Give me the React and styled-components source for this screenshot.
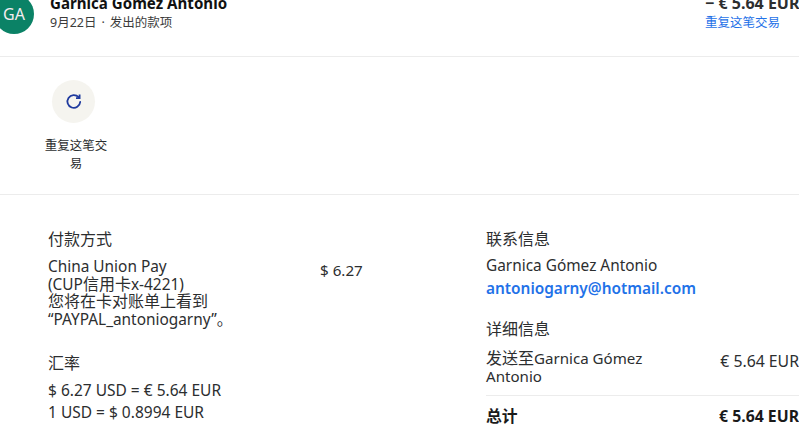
import React from "react";
import styled, { createGlobalStyle } from "styled-components";

const Global = createGlobalStyle`
  html, body { margin: 0; padding: 0; background: #fff; overflow: hidden; }
  body { font-family: "Noto Sans", "Noto Sans CJK SC", sans-serif; color: #2c2e2f; width: 799px; height: 436px; }
`;
const Page = styled.div`
  width: 799px; height: 436px; overflow: hidden;
`;
const Header = styled.header`
  height: 56px; border-bottom: 1px solid #ececec;
  display: flex; justify-content: space-between; align-items: flex-start;
`;
const Who = styled.div`display: flex; gap: 16px; margin-left: -6px;`;
const Avatar = styled.div`
  width: 40px; height: 40px; margin-top: -6px; border-radius: 50%; background: #0b8266; color: #f4ecf0;
  font-size: 16px; display: flex; align-items: center; justify-content: center; flex: none;
`;
const Name = styled.div`font-size: 15.1px; font-weight: 700; color: #111; line-height: 20px; margin-top: -7px;`;
const Sub = styled.div`font-size: 12.5px; line-height: 18px; margin-top: 1px; color: #3c3c3c;`;
const Dot = styled.span`margin: 0 5px;`;
const Amount = styled.div`width: 94px; margin-top: -7px; flex: none;`;
const AmountValue = styled.div`font-size: 16px; font-weight: 700; line-height: 20px; white-space: nowrap; color: #2c2e2f;`;
const RepeatLink = styled.a`display: block; font-size: 12.5px; line-height: 18px; margin-top: 1px; color: #1f72e8; white-space: nowrap;`;
const Actions = styled.section`
  height: 137px; border-bottom: 1px solid #ececec; padding-left: 44px;
`;
const Action = styled.div`
  width: 64px; display: flex; flex-direction: column; align-items: center; padding-top: 23px;
`;
const IconCircle = styled.div`
  width: 43px; height: 43px; border-radius: 50%; background: #f5f4ef;
  display: flex; align-items: center; justify-content: center; margin: 0 5px 14px 0;
`;
const ActionLabel = styled.div`font-size: 12.5px; line-height: 18px; text-align: center; color: #2c2e2f;`;
const Details = styled.main`
  display: grid; grid-template-columns: 438px 313px; padding: 33px 0 0 48px;
`;
const Col = styled.div`display: flex; flex-direction: column;`;
const Heading = styled.h3`font-size: 16px; line-height: 22px; font-weight: 400; margin: 0; color: #2c2e2f;`;
const Pay = styled.div`display: grid; grid-template-columns: 272px auto; margin-top: 8px;`;
const Multi = styled.div`font-size: 15.4px; line-height: 17.7px;`;
const Cjk = styled.span`font-size: 16px; line-height: 1;`;
const PayAmt = styled.div`font-size: 15.2px; line-height: 18px; margin-top: 3px;`;
const Rate = styled.div`font-size: 15.5px; line-height: 22px; margin-top: 5px;`;
const Gap = styled.div`height: ${p => p.$h}px;`;
const Contact = styled.div`font-size: 15.4px; line-height: 22px; margin-top: 5px;`;
const Email = styled.a`display: block; margin-top: 1px; font-weight: 600; color: #1f72e8; font-size: 15.4px;`;
const Row = styled.div`
  display: flex; justify-content: space-between; align-items: flex-start;
  padding-bottom: ${p => p.$pb || 0}px; border-bottom: 1px solid #ececec;
`;
const RowLabel = styled.div`width: 180px; font-size: 15.1px; line-height: 18px;`;
const RowValue = styled.div`font-size: 15.8px; line-height: 18px; margin-top: 3px; white-space: nowrap;`;
const TotalRow = styled.div`
  display: flex; justify-content: space-between; align-items: center; font-weight: 700; font-size: 15.8px; color: #1a1a1a; margin-top: 10px; line-height: 20px;
`;

export default function App() {
  return (
    <Page>
      <Global />
      <Header>
        <Who>
          <Avatar>GA</Avatar>
          <div>
            <Name>Garnica Gómez Antonio</Name>
            <Sub>9月22日<Dot>·</Dot>发出的款项</Sub>
          </div>
        </Who>
        <Amount>
          <AmountValue>− € 5.64 EUR</AmountValue>
          <RepeatLink>重复这笔交易</RepeatLink>
        </Amount>
      </Header>
      <Actions>
        <Action>
          <IconCircle>
            <svg width="18" height="18" viewBox="0 0 18 18" fill="none" stroke="#1f3a9e" strokeWidth="1.8">
              <path d="M13.6 4.2A6.4 6.4 0 1 0 15.2 9" strokeLinecap="round" />
              <path d="M14.6 1.6v3.6H11" />
            </svg>
          </IconCircle>
          <ActionLabel>重复这笔交易</ActionLabel>
        </Action>
      </Actions>
      <Details>
        <Col>
          <Heading>付款方式</Heading>
          <Pay>
            <Multi>China Union Pay<br />(CUP<Cjk>信用卡</Cjk>x-4221)<br /><Cjk>您将在卡对账单上看到</Cjk><br />“PAYPAL_antoniogarny”<Cjk>。</Cjk></Multi>
            <PayAmt>$ 6.27</PayAmt>
          </Pay>
          <Gap $h={23} />
          <Heading>汇率</Heading>
          <Rate>$ 6.27 USD = € 5.64 EUR<br />1 USD = $ 0.8994 EUR</Rate>
        </Col>
        <Col>
          <Heading>联系信息</Heading>
          <Contact>Garnica Gómez Antonio<Email>antoniogarny@hotmail.com</Email></Contact>
          <Gap $h={18} />
          <Heading>详细信息</Heading>
          <Gap $h={9} />
          <Row $pb={10}>
            <RowLabel><Cjk>发送至</Cjk>Garnica Gómez Antonio</RowLabel>
            <RowValue>€ 5.64 EUR</RowValue>
          </Row>
          <TotalRow><span>总计</span><span>€ 5.64 EUR</span></TotalRow>
        </Col>
      </Details>
    </Page>
  );
}
